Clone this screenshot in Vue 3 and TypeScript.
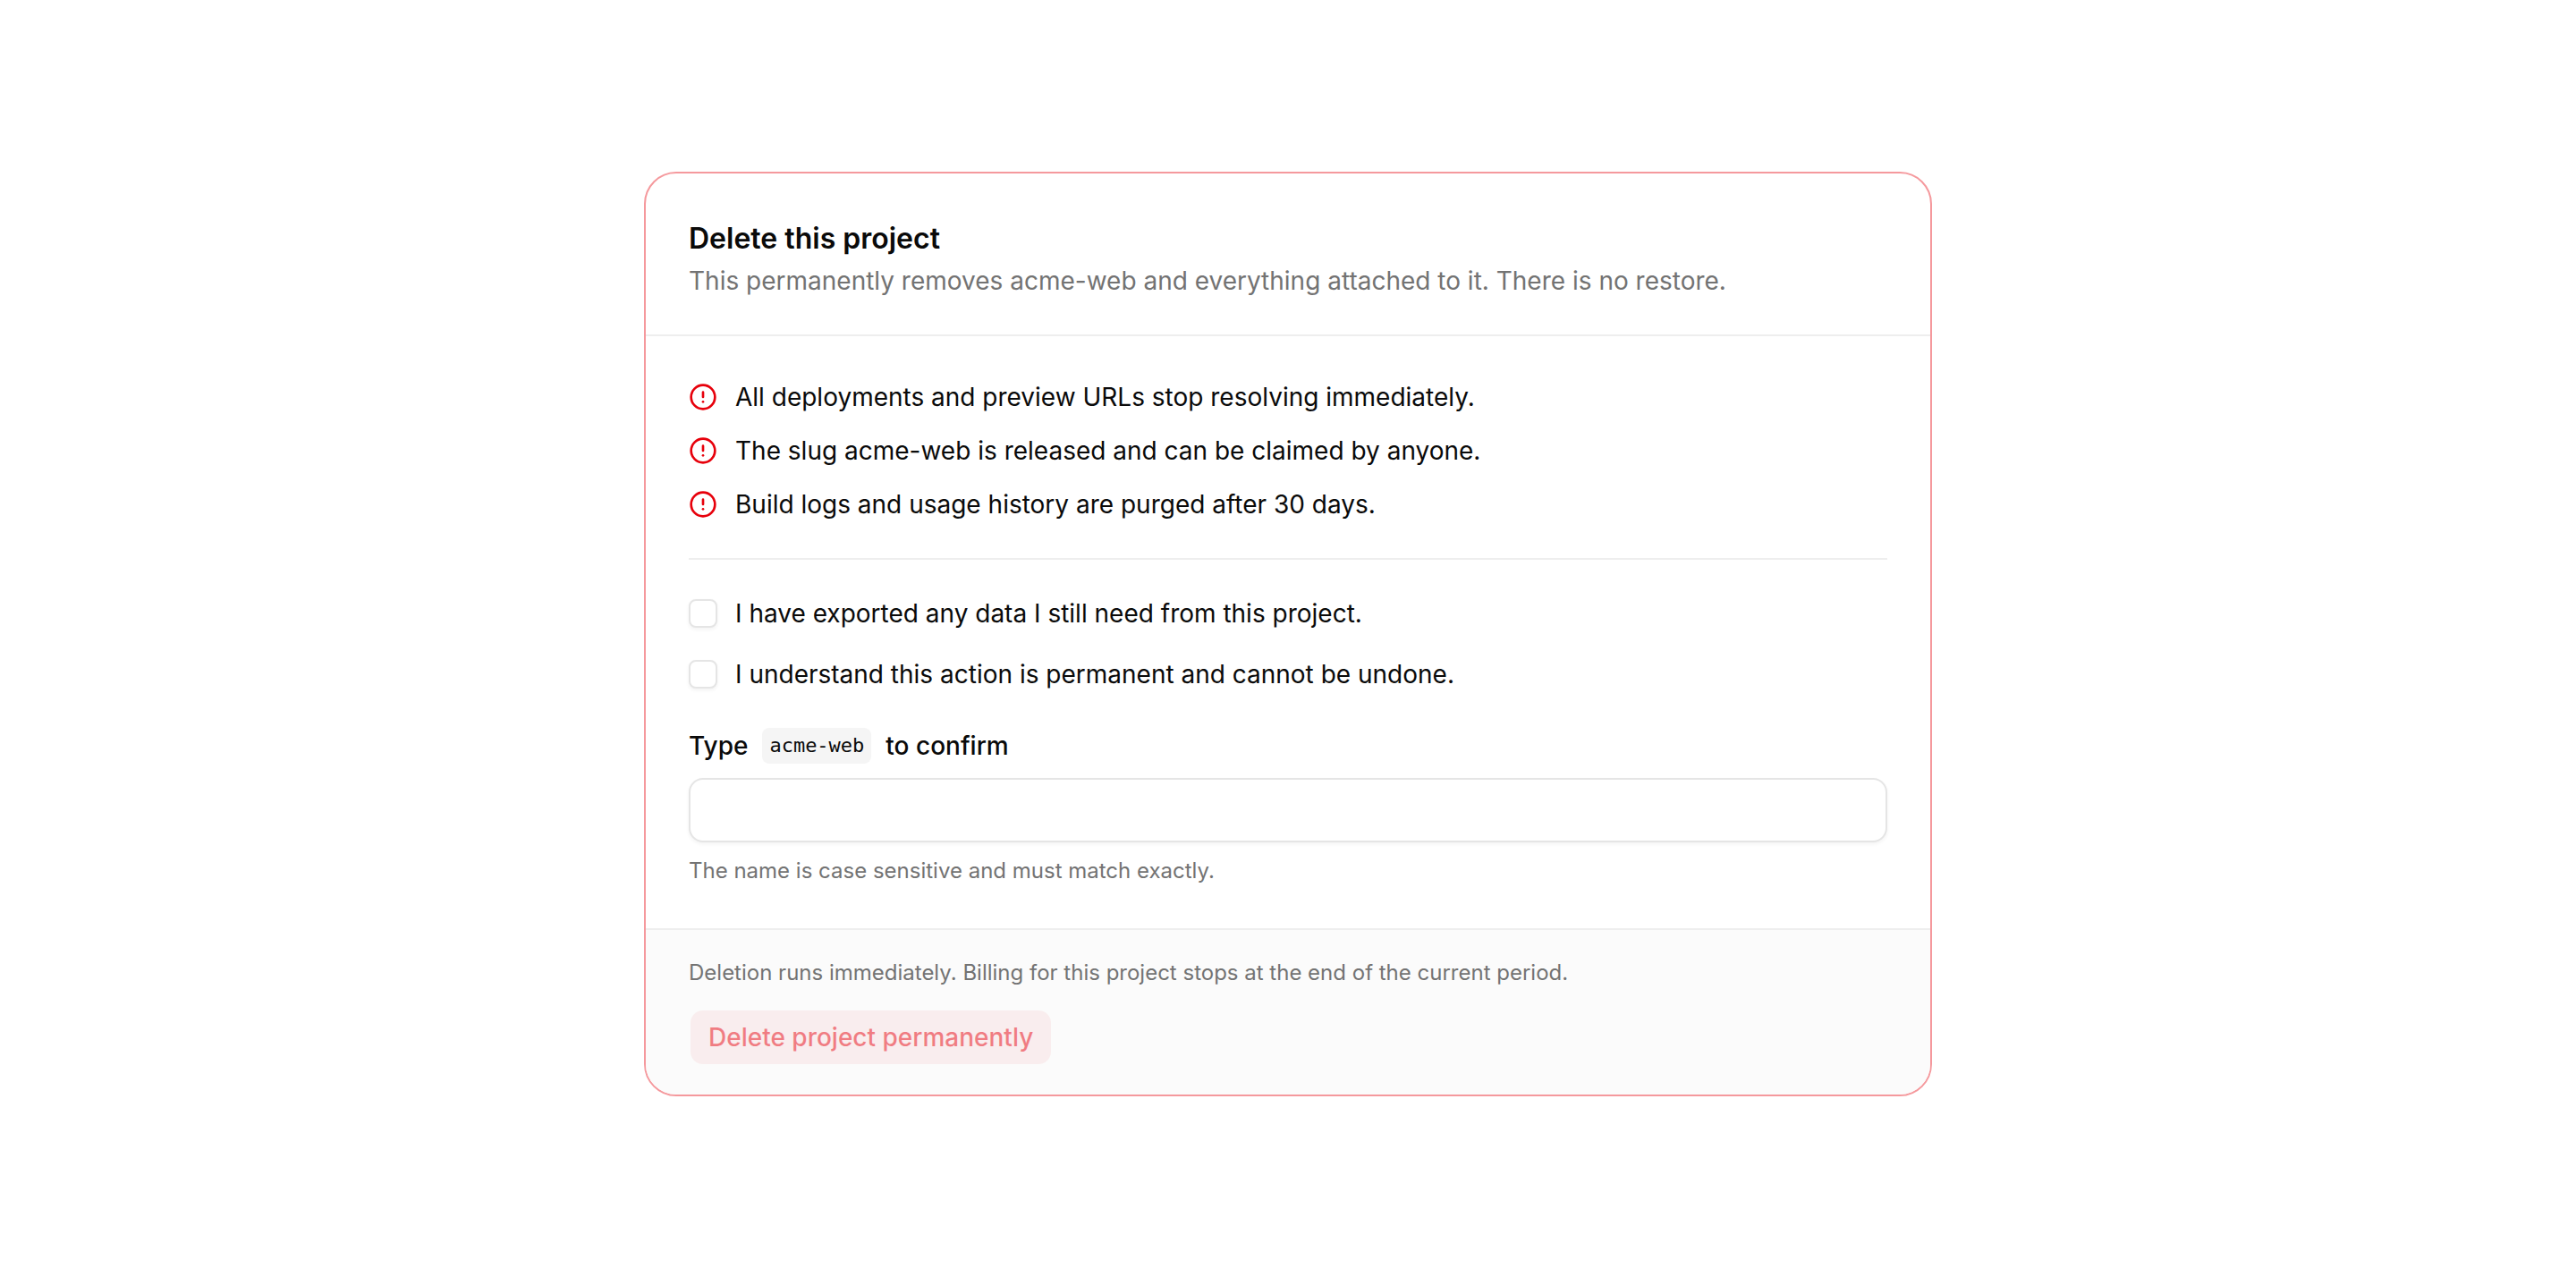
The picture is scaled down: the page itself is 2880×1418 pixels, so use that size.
<script setup lang="ts">
import { computed, reactive, ref } from 'vue'

interface Acknowledgement {
  id: string
  text: string
  checked: boolean
}

const projectName = 'acme-web'

const consequences: string[] = [
  'All deployments and preview URLs stop resolving immediately.',
  `The slug ${projectName} is released and can be claimed by anyone.`,
  'Build logs and usage history are purged after 30 days.',
]

const acknowledgements = reactive<Acknowledgement[]>([
  { id: 'ack-export', text: 'I have exported any data I still need from this project.', checked: false },
  { id: 'ack-permanent', text: 'I understand this action is permanent and cannot be undone.', checked: false },
])

const typedName = ref('')

const canDelete = computed(
  () => typedName.value === projectName && acknowledgements.every((item) => item.checked),
)
</script>

<template>
  <main class="page">
    <form class="card" @submit.prevent>
      <header class="card-header">
        <h1 class="title">Delete this project</h1>
        <p class="description">
          This permanently removes {{ projectName }} and everything attached to it. There is no restore.
        </p>
      </header>

      <div class="card-body">
        <ul class="consequences">
          <li v-for="text in consequences" :key="text" class="row">
            <svg class="alert-icon" viewBox="0 0 24 24" aria-hidden="true">
              <circle cx="12" cy="12" r="10" />
              <path d="M12 8v4" />
              <path d="M12 16h.01" />
            </svg>
            <span>{{ text }}</span>
          </li>
        </ul>

        <hr class="separator" />

        <div class="acknowledgements">
          <label v-for="item in acknowledgements" :key="item.id" class="row" :for="item.id">
            <input :id="item.id" v-model="item.checked" class="checkbox" type="checkbox" />
            <span>{{ item.text }}</span>
          </label>
        </div>

        <div class="field">
          <label class="field-label" for="confirm-name">
            <span>Type</span>
            <code class="code">{{ projectName }}</code>
            <span>to confirm</span>
          </label>
          <input
            id="confirm-name"
            v-model="typedName"
            class="text-input"
            type="text"
            autocomplete="off"
            spellcheck="false"
            aria-describedby="confirm-hint"
          />
          <p id="confirm-hint" class="hint">The name is case sensitive and must match exactly.</p>
        </div>
      </div>

      <footer class="card-footer">
        <p class="hint">
          Deletion runs immediately. Billing for this project stops at the end of the current period.
        </p>
        <button class="delete-button" type="submit" :disabled="!canDelete">
          Delete project permanently
        </button>
      </footer>
    </form>
  </main>
</template>

<style>
body {
  background: #ffffff;
}
</style>

<style scoped>
.page {
  display: flex;
  align-items: center;
  justify-content: center;
  min-height: 100vh;
  box-sizing: border-box;
  padding: 48px;
  font-family: Inter, 'Liberation Sans', sans-serif;
  font-size: 28px;
  line-height: 40px;
  color: #0a0a0a;
}

.card {
  width: 100%;
  max-width: 1440px;
  box-sizing: border-box;
  border: 2px solid #f5999d;
  border-radius: 36px;
  overflow: hidden;
  background: #ffffff;
}

.card-header {
  display: flex;
  flex-direction: column;
  gap: 2px;
  padding: 48px 48px 40px;
  border-bottom: 2px solid #eeeeee;
}

.title {
  margin: 0;
  font-size: 32px;
  line-height: 50px;
  font-weight: 600;
}

.description {
  margin: 0;
  color: #737373;
}

.card-body {
  display: flex;
  flex-direction: column;
  gap: 40px;
  padding: 48px;
}

.consequences {
  display: flex;
  flex-direction: column;
  gap: 20px;
  margin: 0;
  padding: 0;
  list-style: none;
}

.row {
  display: flex;
  align-items: center;
  gap: 20px;
}

.alert-icon {
  flex: none;
  width: 32px;
  height: 32px;
  fill: none;
  stroke: #e7000b;
  stroke-width: 2;
  stroke-linecap: round;
  stroke-linejoin: round;
}

.separator {
  width: 100%;
  height: 2px;
  margin: 0;
  border: 0;
  background: #eeeeee;
}

.acknowledgements {
  display: flex;
  flex-direction: column;
  gap: 28px;
}

.checkbox {
  flex: none;
  appearance: none;
  box-sizing: border-box;
  width: 32px;
  height: 32px;
  margin: 0;
  border: 2px solid #e5e5e5;
  border-radius: 8px;
  background: #ffffff;
  box-shadow: 0 2px 4px rgba(0, 0, 0, 0.05);
}

.checkbox:checked {
  border-color: #171717;
  background: #171717;
}

.field {
  display: flex;
  flex-direction: column;
  gap: 16px;
}

.field-label {
  display: flex;
  align-items: center;
  gap: 16px;
  font-weight: 500;
}

.code {
  padding: 0 8px;
  border-radius: 8px;
  background: #f5f5f5;
  font-family: 'DejaVu Sans Mono', monospace;
  font-size: 22px;
  font-weight: 400;
}

.text-input {
  width: 100%;
  height: 72px;
  box-sizing: border-box;
  padding: 0 24px;
  border: 2px solid #e5e5e5;
  border-radius: 16px;
  background: #ffffff;
  box-shadow: 0 2px 4px rgba(0, 0, 0, 0.05);
  font: inherit;
  color: inherit;
}

.hint {
  margin: 0;
  font-size: 24px;
  line-height: 32px;
  color: #737373;
}

.card-footer {
  display: flex;
  flex-direction: column;
  align-items: flex-start;
  gap: 24px;
  padding: 32px 48px;
  border-top: 2px solid #eeeeee;
  background: #fbfbfb;
}

.delete-button {
  height: 64px;
  box-sizing: border-box;
  padding: 0 20px;
  border: 2px solid transparent;
  border-radius: 16px;
  background: rgba(231, 0, 11, 0.1);
  background-clip: padding-box;
  font: inherit;
  font-weight: 500;
  color: #e7000b;
  cursor: pointer;
}

.delete-button:disabled {
  opacity: 0.5;
  cursor: default;
}
</style>
